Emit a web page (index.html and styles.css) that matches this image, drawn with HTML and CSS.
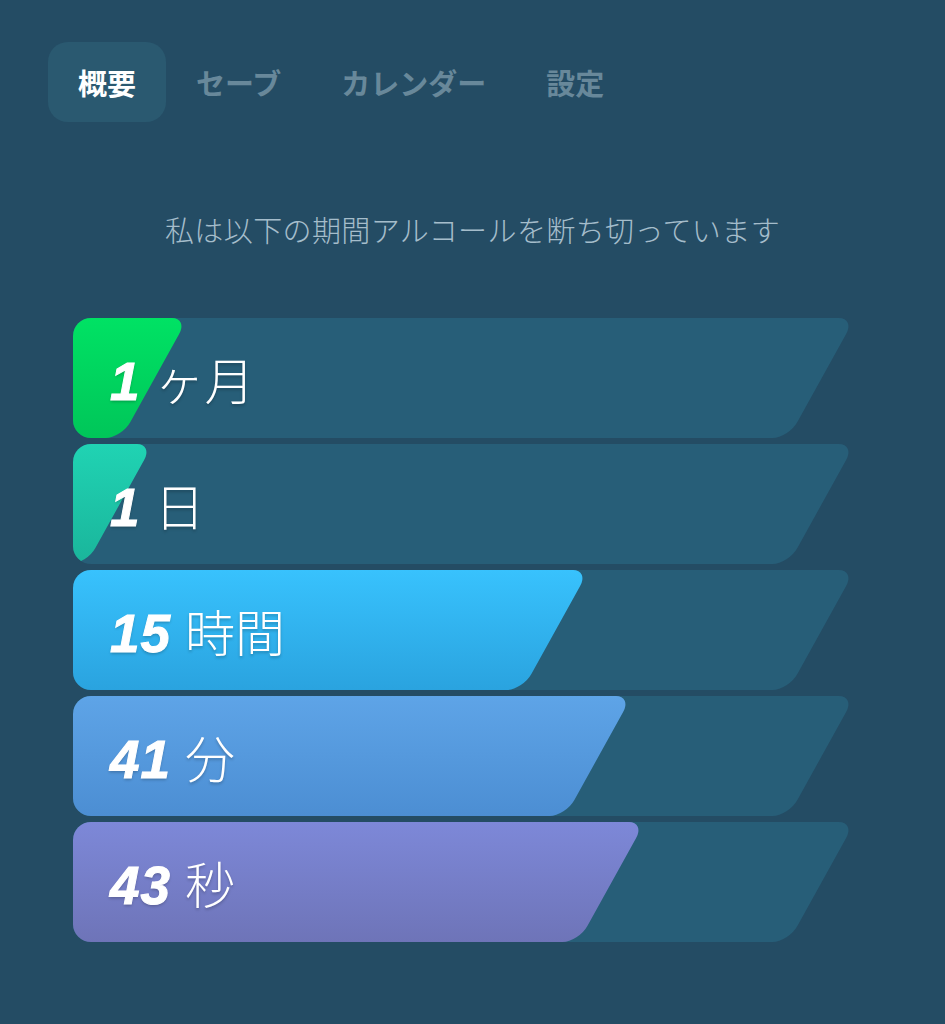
FILE: index.html
```html
<!DOCTYPE html>
<html lang="ja">
<head>
<meta charset="utf-8">
<link rel="stylesheet" href="styles.css">
</head>
<body>
<div class="page">
  <nav class="tabs">
    <div class="tab active">概要</div>
    <div class="tab">セーブ</div>
    <div class="tab">カレンダー</div>
    <div class="tab">設定</div>
  </nav>
  <p class="subtitle">私は以下の期間アルコールを断ち切っています</p>
  <div class="bars">
    <div class="bar">
      <div class="track"></div>
      <div class="fill green" style="width:115px"></div>
      <div class="label"><span class="num">1</span><span class="unit">ヶ月</span></div>
    </div>
    <div class="bar">
      <div class="track"></div>
      <div class="fill teal" style="width:80px"></div>
      <div class="label"><span class="num">1</span><span class="unit">日</span></div>
    </div>
    <div class="bar">
      <div class="track"></div>
      <div class="fill blue" style="width:516px"></div>
      <div class="label"><span class="num">15</span><span class="unit">時間</span></div>
    </div>
    <div class="bar">
      <div class="track"></div>
      <div class="fill sky" style="width:559px"></div>
      <div class="label"><span class="num">41</span><span class="unit">分</span></div>
    </div>
    <div class="bar">
      <div class="track"></div>
      <div class="fill violet" style="width:572px"></div>
      <div class="label"><span class="num">43</span><span class="unit">秒</span></div>
    </div>
  </div>
</div>
</body>
</html>
```
FILE: styles.css
```css
html, body {
  margin: 0;
  padding: 0;
  background: #244c64;
}
.page {
  width: 945px;
  height: 1024px;
  background: #244c64;
  font-family: "Noto Sans CJK JP", "Noto Sans", sans-serif;
  overflow: hidden;
}
.tabs {
  display: flex;
  padding: 42px 0 0 48px;
}
.tab {
  height: 80px;
  padding: 0 30px;
  display: flex;
  align-items: center;
  font-size: 29px;
  font-weight: 700;
  color: #68889a;
  border-radius: 20px;
}
.tab.active {
  background: #2a5970;
  color: #ffffff;
}
.subtitle {
  margin: 87px 0 0;
  text-align: center;
  font-size: 29px;
  font-weight: 300;
  line-height: 40px;
  color: #a5bdcb;
  letter-spacing: 0.4px;
}
.bars {
  margin: 69px 0 0 73px;
  width: 782px;
  display: flex;
  flex-direction: column;
  gap: 6px;
}
.bar {
  display: grid;
  height: 120px;
  overflow: hidden;
  border-radius: 18px 0 0 18px;
}
.bar > * {
  grid-area: 1 / 1;
}
.track,
.fill {
  margin-left: -140px;
  transform-origin: top right;
  transform: skewX(-29deg);
  border-radius: 16px;
}
.track {
  background: #275e78;
}
.fill {
  justify-self: start;
  box-sizing: content-box;
  padding-left: 140px;
  margin-left: -140px;
}
.green { background: linear-gradient(#00e264, #00c659); }
.teal { background: linear-gradient(#20d3b3, #1ab59b); }
.blue { background: linear-gradient(#38c2fd, #2aa3df); }
.sky { background: linear-gradient(#5ea4e7, #4c8ed3); }
.violet { background: linear-gradient(#7d88d8, #6e74b8); }
.label {
  align-self: center;
  padding-left: 37px;
  display: flex;
  align-items: baseline;
  color: #ffffff;
  text-shadow: 0 2px 3px rgba(0, 0, 0, 0.22);
  position: relative;
}
.num {
  font-family: "Liberation Sans", Arial, sans-serif;
  font-weight: 700;
  font-style: italic;
  font-size: 53px;
  letter-spacing: 1px;
  margin-right: 14px;
  -webkit-text-stroke: 1px #ffffff;
}
.unit {
  font-family: "Noto Sans CJK JP", sans-serif;
  font-weight: 300;
  font-size: 50px;
}
```
